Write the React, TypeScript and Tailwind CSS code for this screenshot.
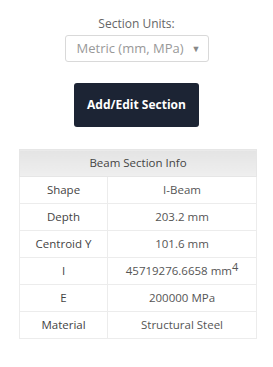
const rows: [string, React.ReactNode][] = [
  ["Shape", "I-Beam"],
  ["Depth", "203.2 mm"],
  ["Centroid Y", "101.6 mm"],
  [
    "I",
    <>
      45719276.6658 mm<sup className="text-[11px] leading-none relative -top-[4px] align-baseline">4</sup>
    </>,
  ],
  ["E", "200000 MPa"],
  ["Material", "Structural Steel"],
];

export default function App() {
  return (
    <div className="w-[273px] h-[367px] bg-white font-['Open_Sans',sans-serif] text-[#333]">
      <div className="flex flex-col items-center pt-[15px]">
        <label className="text-[12px] leading-[17px] text-[#666]">Section Units:</label>
        <div className="mt-[3px] w-[144px] h-[27px] border border-[#d9d9d9] rounded-[3px] flex items-center justify-between pl-[11px] pr-[7px]">
          <span className="text-[13px] text-[#999]">Metric (mm, MPa)</span>
          <span className="text-[9px] text-[#888]">▼</span>
        </div>
        <button className="mt-[21px] w-[125px] h-[44px] rounded-[3px] bg-[#1c2434] text-white text-[12px] font-bold">
          Add/Edit Section
        </button>
      </div>
      <table className="mt-[22px] mx-[19px] w-[238px] border-collapse text-[11.5px] text-[#555]">
        <thead>
          <tr>
            <th
              colSpan={2}
              className="h-[27px] font-normal text-[#444] bg-gradient-to-b from-[#e4e4e4] to-[#efefef] border border-[#e6e6e6]"
            >
              Beam Section Info
            </th>
          </tr>
        </thead>
        <tbody>
          {rows.map(([k, v]) => (
            <tr key={k} className="h-[27px]">
              <td className="w-[88px] text-center border border-[#ececec] text-[#444]">{k}</td>
              <td className="text-center border border-[#ececec]">{v}</td>
            </tr>
          ))}
        </tbody>
      </table>
    </div>
  );
}
